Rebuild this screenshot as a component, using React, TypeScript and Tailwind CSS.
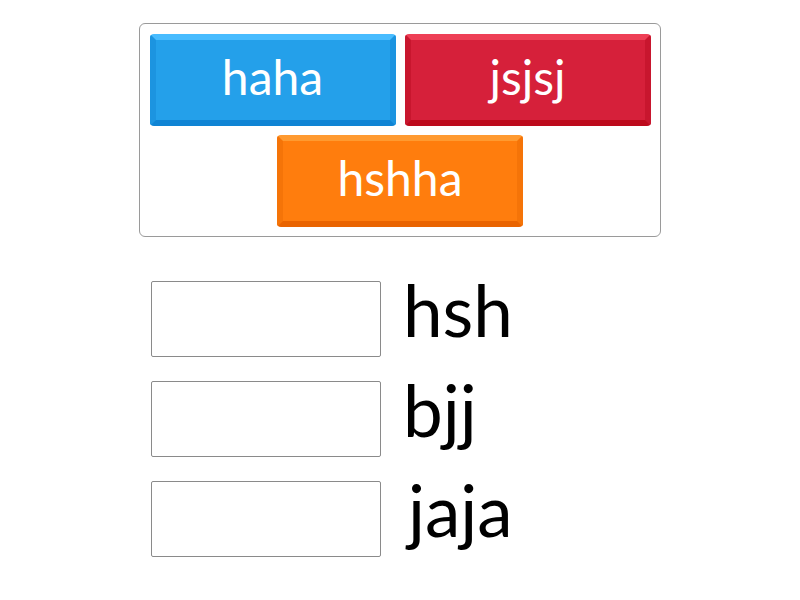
import React from "react";

const tiles = [
  { text: "haha", face: "bg-[#24a0ea]", edge: "border-t-[#48bcff] border-x-[#1c94e0] border-b-[#0f84d4]" },
  { text: "jsjsj", face: "bg-[#d6203a]", edge: "border-t-[#ee3f56] border-x-[#c8162e] border-b-[#bd0a1c]" },
  { text: "hshha", face: "bg-[#ff7d0d]", edge: "border-t-[#ff9a30] border-x-[#f57408] border-b-[#e96400]" },
];

const rows = ["hsh", "bjj", "jaja"];

function Tile({ text, face, edge }: { text: string; face: string; edge: string }) {
  return (
    <div
      className={`w-[246px] h-[92px] rounded-[4px] border-[6px] ${face} ${edge} flex items-center justify-center text-white text-[48px] leading-none pb-[6px]`}
    >
      {text}
    </div>
  );
}

export default function App() {
  return (
    <div className="w-[800px] h-[600px] bg-white flex flex-col items-center pt-[23px] font-['Lato',sans-serif]">
      <div className="w-[522px] h-[214px] border border-[#9a9a9a] rounded-[6px] px-[9px] pt-[10px] flex flex-col items-center gap-[9px]">
        <div className="flex gap-[9px]">
          <Tile {...tiles[0]} />
          <Tile {...tiles[1]} />
        </div>
        <Tile {...tiles[2]} />
      </div>
      <div className="w-[522px] pl-[12px] mt-[44px] flex flex-col gap-[24px]">
        {rows.map((r) => (
          <div key={r} className="h-[76px] flex items-center gap-[22px]">
            <div className="w-[230px] h-[76px] border border-[#8a8a8a] rounded-[2px] bg-white" />
            <span className={`text-[71px] leading-none text-black pb-[20px] ${r === "jaja" ? "pl-[5px]" : ""}`}>{r}</span>
          </div>
        ))}
      </div>
    </div>
  );
}
